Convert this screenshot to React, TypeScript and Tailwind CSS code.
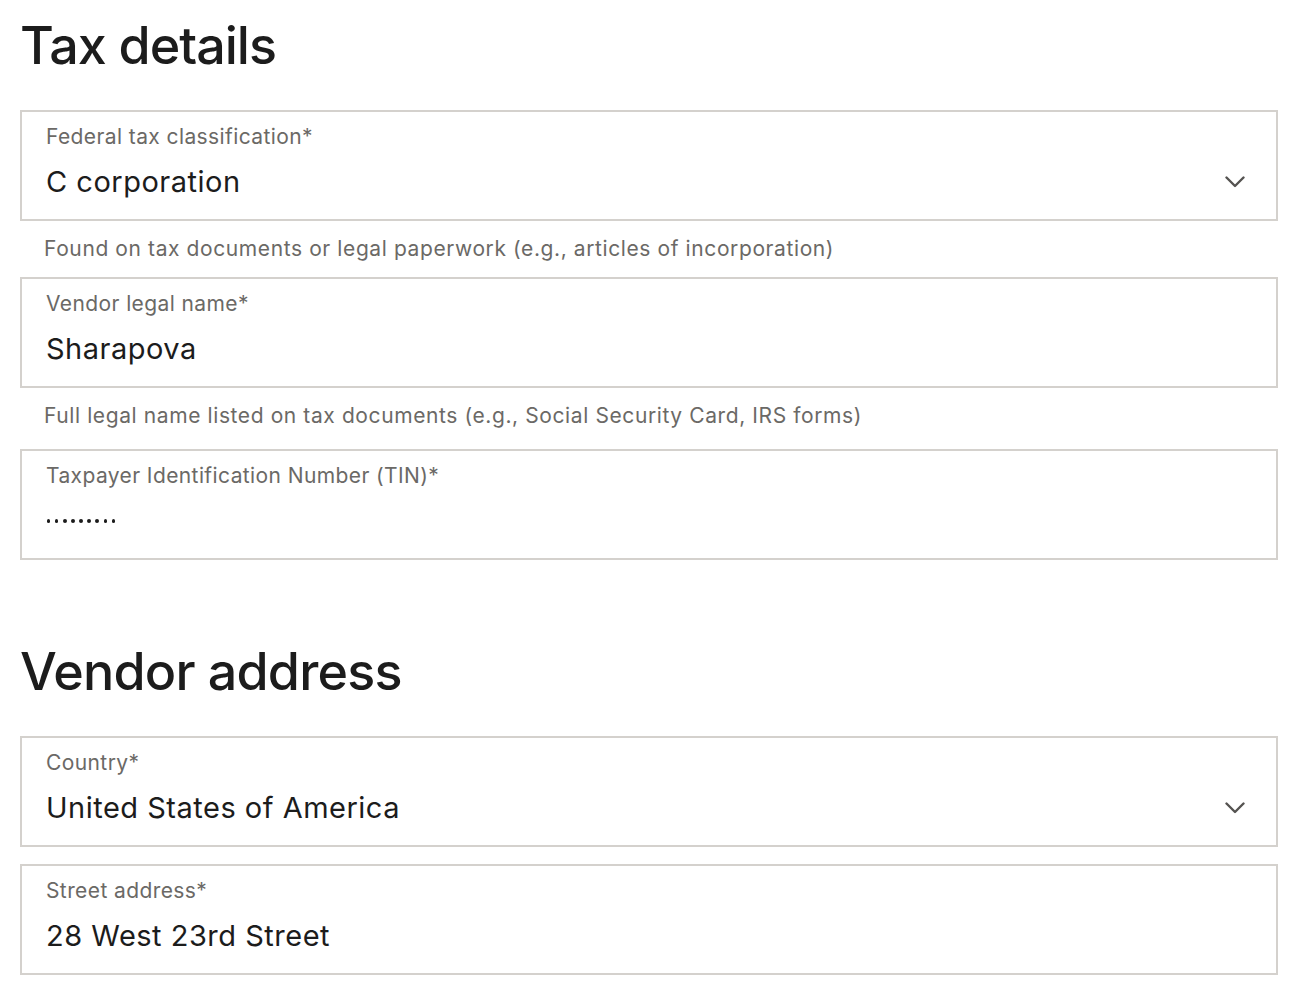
type FieldProps = {
  label: string;
  value?: string;
  select?: boolean;
  masked?: number;
};

function Chevron() {
  return (
    <svg width="20" height="12" viewBox="0 0 20 12" fill="none" className="text-[#555351]">
      <path d="M1.5 1.5 L10 10 L18.5 1.5" stroke="currentColor" strokeWidth="2.4" strokeLinecap="round" strokeLinejoin="round" />
    </svg>
  );
}

function Field({ label, value, select, masked }: FieldProps) {
  return (
    <div className="h-[111px] border-2 border-[#d4d1cd] bg-white pl-[24px] pr-[31px] pt-[11px]">
      <div className="text-[21px] leading-[28px] tracking-[0.4px] text-[#6b6966]">{label}</div>
      <div className="mt-[13px] flex h-[36px] items-center justify-between">
        {masked ? (
          <div className="flex gap-[4.7px] pl-[1px]">
            {Array.from({ length: masked }).map((_, i) => (
              <span key={i} className="h-[3.4px] w-[3.4px] rounded-full bg-[#1c1c1c]" />
            ))}
          </div>
        ) : (
          <div className="text-[29px] leading-[36px] tracking-[0.5px] text-[#1c1c1c]">{value}</div>
        )}
        {select && <Chevron />}
      </div>
    </div>
  );
}

function Hint({ children, last }: { children: string; last?: boolean }) {
  return (
    <p className={last ? "px-[24px] pb-[19px] pt-[14px] text-[21px] leading-[28px] tracking-[0.6px] text-[#6b6966]" : "px-[24px] py-[14px] text-[21px] leading-[28px] tracking-[0.6px] text-[#6b6966]"}>
      {children}
    </p>
  );
}

export default function App() {
  return (
    <main className="min-h-screen bg-white pl-[20px] pr-[14px] font-['Inter',sans-serif]">
      <h1 className="pt-[20px] text-[52px] font-medium leading-[52px] tracking-[-1px] text-[#1c1c1c]">Tax details</h1>

      <section className="mt-[38px]">
        <Field label="Federal tax classification*" value="C corporation" select />
        <Hint>Found on tax documents or legal paperwork (e.g., articles of incorporation)</Hint>
        <Field label="Vendor legal name*" value="Sharapova" />
        <Hint last>Full legal name listed on tax documents (e.g., Social Security Card, IRS forms)</Hint>
        <Field label="Taxpayer Identification Number (TIN)*" masked={9} />
      </section>

      <h2 className="mt-[86px] text-[52px] font-medium leading-[52px] tracking-[-0.8px] text-[#1c1c1c]">Vendor address</h2>

      <section className="mt-[38px] flex flex-col gap-[17px]">
        <Field label="Country*" value="United States of America" select />
        <Field label="Street address*" value="28 West 23rd Street" />
      </section>
    </main>
  );
}
